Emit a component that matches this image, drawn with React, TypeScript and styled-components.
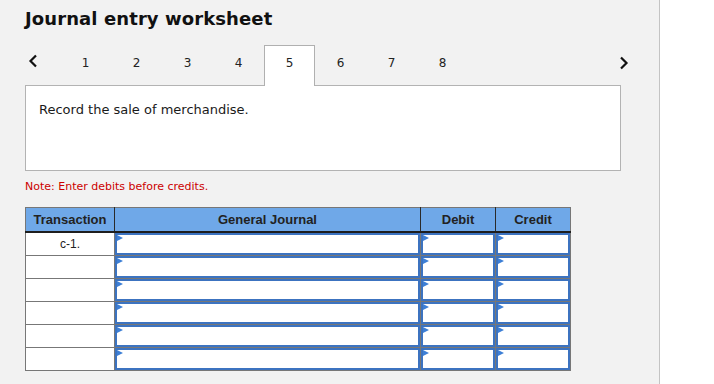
import React from "react";
import styled, { createGlobalStyle } from "styled-components";

const Global = createGlobalStyle`
  html, body { margin: 0; padding: 0; background: #ffffff; }
  body { font-family: "DejaVu Sans", Verdana, sans-serif; }
`;

const Panel = styled.div`
  width: 660px;
  height: 384px;
  box-sizing: border-box;
  background: #f2f2f2;
  border-right: 1px solid #c4c4c4;
  padding: 8px 0 0 25px;
`;

const Title = styled.h1`
  margin: 0;
  font-family: "DejaVu Sans", Verdana, sans-serif;
  font-weight: bold;
  font-size: 18px;
  letter-spacing: 0.1px;
  line-height: 22px;
  color: #111;
`;

const TabBar = styled.div`
  display: flex;
  align-items: stretch;
  width: 606px;
  height: 41px;
  margin-top: 15px;
  margin-bottom: -1px;
  position: relative;
  z-index: 1;
`;

const NavButton = styled.div<{ $w: number; $align: string }>`
  width: ${(p) => p.$w}px;
  display: flex;
  align-items: center;
  justify-content: ${(p) => p.$align};
  padding-bottom: 6px;
  box-sizing: border-box;
`;

const Tab = styled.div<{ $active?: boolean }>`
  width: 51px;
  box-sizing: border-box;
  display: flex;
  align-items: center;
  justify-content: center;
  padding-bottom: 6px;
  font-size: 12px;
  color: #222;
  background: ${(p) => (p.$active ? "#ffffff" : "transparent")};
  border: 1px solid ${(p) => (p.$active ? "#b0b0b0" : "transparent")};
  border-bottom: none;
`;

const Spacer = styled.div`
  flex: 1;
`;

const Prompt = styled.div`
  width: 596px;
  height: 86px;
  box-sizing: border-box;
  background: #fff;
  border: 1px solid #b3b3b3;
  padding: 15px 13px;
  font-size: 13px;
  line-height: 18px;
  color: #1a1a1a;
`;

const Note = styled.div`
  margin-top: 9px;
  font-size: 11px;
  line-height: 14px;
  color: #cc0000;
`;

const Table = styled.table`
  margin-top: 13px;
  border-collapse: collapse;
  table-layout: fixed;
  font-family: "Liberation Sans", Arial, sans-serif;
  border: 1px solid #777;
`;

const Th = styled.th<{ $w: number }>`
  width: ${(p) => p.$w}px;
  height: 23px;
  padding: 0;
  background: #6fa8e8;
  color: #222;
  font-size: 13px;
  font-weight: bold;
  border-top: 1px solid #777;
  border-right: 1px solid #2a2a2a;
  border-bottom: 2px solid #1e1e1e;
  &:first-child { border-left: 1px solid #777; }
  &:last-child { border-right: 1px solid #777; }
`;

const Td = styled.td`
  height: 22px;
  padding: 0;
  border: 1px solid #777;
  background: #fff;
  text-align: center;
  vertical-align: top;
  font-size: 12px;
  color: #222;
  line-height: 22px;
`;

const InputBox = styled.div`
  position: relative;
  height: 22px;
  box-sizing: border-box;
  border: 2px solid #3c73c0;
  background: #fff;
`;

const Flag = styled.span`
  position: absolute;
  left: 0;
  top: 0;
  width: 0;
  height: 0;
  border-top: 3.5px solid transparent;
  border-bottom: 3.5px solid transparent;
  border-left: 6px solid #3d7fd6;
`;

const Chevron = ({ dir }: { dir: "left" | "right" }) => (
  <svg width="10" height="14" viewBox="0 0 10 14">
    <path
      d={dir === "left" ? "M8 1.5 L2.5 7 L8 12.5" : "M2 1.5 L7.5 7 L2 12.5"}
      fill="none"
      stroke="#111"
      strokeWidth="2.2"
    />
  </svg>
);

const Input = () => (
  <InputBox>
    <Flag />
  </InputBox>
);

export default function App() {
  const rows = ["c-1.", "", "", "", "", ""];
  return (
    <>
      <Global />
      <Panel>
        <Title>Journal entry worksheet</Title>
        <TabBar>
          <NavButton $w={35} $align="flex-start">
            <span style={{ marginLeft: 3 }}>
              <Chevron dir="left" />
            </span>
          </NavButton>
          {[1, 2, 3, 4, 5, 6, 7, 8].map((n) => (
            <Tab key={n} $active={n === 5}>
              {n}
            </Tab>
          ))}
          <Spacer />
          <NavButton $w={14} $align="center">
            <Chevron dir="right" />
          </NavButton>
        </TabBar>
        <Prompt>Record the sale of merchandise.</Prompt>
        <Note>Note: Enter debits before credits.</Note>
        <Table>
          <thead>
            <tr>
              <Th $w={88}>Transaction</Th>
              <Th $w={305}>General Journal</Th>
              <Th $w={74}>Debit</Th>
              <Th $w={74}>Credit</Th>
            </tr>
          </thead>
          <tbody>
            {rows.map((r, i) => (
              <tr key={i}>
                <Td>{r}</Td>
                <Td><Input /></Td>
                <Td><Input /></Td>
                <Td><Input /></Td>
              </tr>
            ))}
          </tbody>
        </Table>
      </Panel>
    </>
  );
}
